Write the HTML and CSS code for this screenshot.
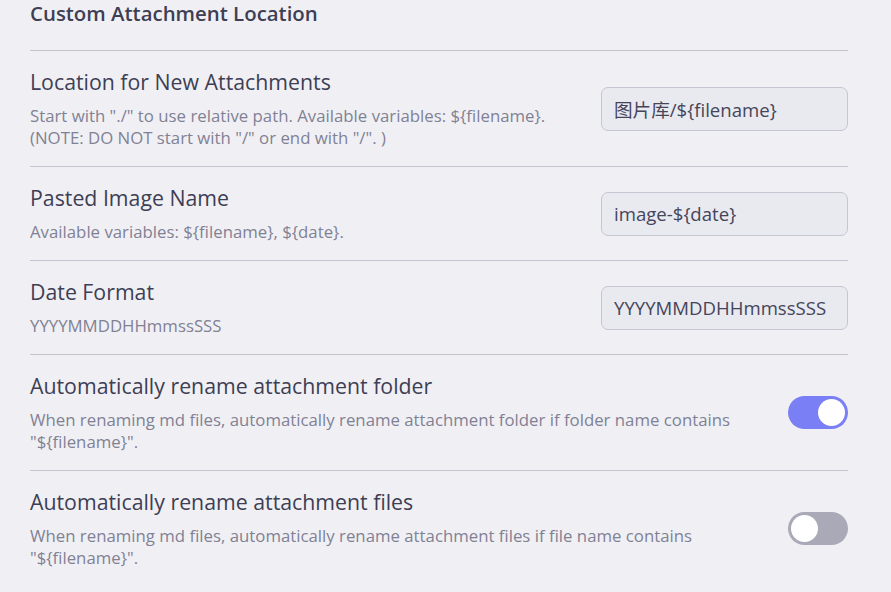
FILE: index.html
```html
<!DOCTYPE html>
<html>
<head>
<meta charset="utf-8">
<link rel="stylesheet" href="styles.css">
</head>
<body>
<div class="page">
  <h2 class="heading">Custom Attachment Location</h2>
  <div class="item">
    <div class="info">
      <div class="name">Location for New Attachments</div>
      <div class="desc">Start with "./" to use relative path. Available variables: ${filename}.<br>(NOTE: DO NOT start with "/" or end with "/". )</div>
    </div>
    <div class="control"><input class="text" type="text" value="图片库/${filename}"></div>
  </div>
  <div class="item">
    <div class="info">
      <div class="name">Pasted Image Name</div>
      <div class="desc">Available variables: ${filename}, ${date}.</div>
    </div>
    <div class="control"><input class="text" type="text" value="image-${date}"></div>
  </div>
  <div class="item">
    <div class="info">
      <div class="name">Date Format</div>
      <div class="desc">YYYYMMDDHHmmssSSS</div>
    </div>
    <div class="control"><input class="text" type="text" value="YYYYMMDDHHmmssSSS"></div>
  </div>
  <div class="item">
    <div class="info">
      <div class="name">Automatically rename attachment folder</div>
      <div class="desc">When renaming md files, automatically rename attachment folder if folder name contains "${filename}".</div>
    </div>
    <div class="control"><div class="toggle on"><span class="knob"></span></div></div>
  </div>
  <div class="item">
    <div class="info">
      <div class="name">Automatically rename attachment files</div>
      <div class="desc">When renaming md files, automatically rename attachment files if file name contains "${filename}".</div>
    </div>
    <div class="control"><div class="toggle"><span class="knob"></span></div></div>
  </div>
</div>
</body>
</html>
```
FILE: styles.css
```css
html, body {
  margin: 0;
  padding: 0;
  background: #f0f0f4;
}
body {
  font-family: "Open Sans", "Noto Sans CJK SC", sans-serif;
  color: #3e3e54;
}
.page {
  width: 818px;
  padding: 0 0 0 30px;
}
.heading {
  margin: 0;
  font-size: 20.4px;
  font-weight: 600;
  line-height: 26px;
  padding-bottom: 24px;
  border-bottom: 1px solid #c5c5d2;
  color: #3e3e54;
}
.item {
  display: flex;
  align-items: center;
  padding: 17px 0 17px;
  border-bottom: 1px solid #c5c5d2;
  gap: 40px;
}
.item:last-child {
  border-bottom: none;
}
.info {
  flex: 1;
}
.name {
  font-size: 21.3px;
  line-height: 28px;
  color: #3e3e54;
}
.desc {
  margin-top: 9px;
  font-size: 16.8px;
  line-height: 22px;
  color: #818194;
}
.control {
  flex: none;
  display: flex;
}
.text {
  box-sizing: border-box;
  width: 247px;
  height: 44px;
  padding: 0 12px;
  border: 1px solid #c6c6d3;
  border-radius: 7px;
  background: #e9e9f0;
  font-family: "Open Sans", "Noto Sans CJK SC", sans-serif;
  font-size: 18.6px;
  color: #45455a;
  outline: none;
}
.toggle {
  box-sizing: border-box;
  width: 60px;
  height: 33px;
  border-radius: 17px;
  background: #a9a9b7;
  padding: 3px;
  display: flex;
  justify-content: flex-start;
}
.toggle.on {
  background: #7b7ff6;
  justify-content: flex-end;
}
.knob {
  width: 27px;
  height: 27px;
  border-radius: 50%;
  background: #fff;
}
```
